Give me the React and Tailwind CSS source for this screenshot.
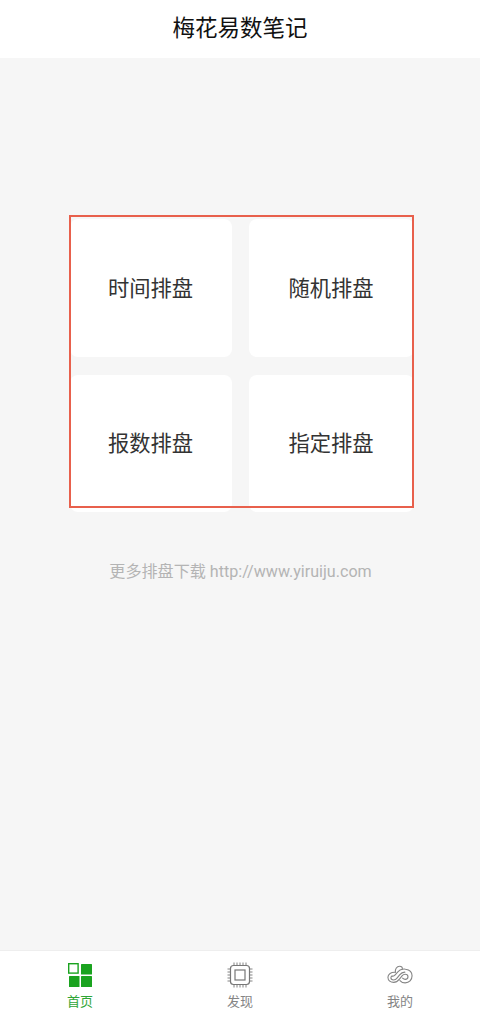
import { Fragment } from "react";

const cjk = "font-['Roboto','Noto_Sans_CJK_SC',sans-serif]";

function HomeIcon() {
  return (
    <svg width="24" height="24" viewBox="0 0 24 24" className="block">
      <rect x="0.7" y="0.7" width="9.4" height="9.4" fill="none" stroke="#1aa31f" strokeWidth="1.4" />
      <rect x="13" y="1" width="11" height="10.5" rx="0.5" fill="#1aa31f" />
      <rect x="1" y="13" width="10.5" height="11" rx="0.5" fill="#1aa31f" />
      <rect x="13" y="13" width="11" height="11" rx="0.5" fill="#1aa31f" />
    </svg>
  );
}

function ChipIcon() {
  const pins = [7, 10, 13, 16, 19];
  return (
    <svg width="26" height="26" viewBox="0 0 26 26" fill="none" stroke="#777" className="block">
      <rect x="3.5" y="3.5" width="19" height="19" rx="3" strokeWidth="1.2" />
      <rect x="8" y="8" width="10" height="10" strokeWidth="1.2" />
      {pins.map((p) => (
        <Fragment key={p}>
          <path d={`M${p} 0.5v2.5M${p} 23v2.5M0.5 ${p}h2.5M23 ${p}h2.5`} strokeWidth="0.9" />
        </Fragment>
      ))}
    </svg>
  );
}

function CloudIcon() {
  return (
    <svg width="26" height="21" viewBox="0 0 28 22" fill="none" stroke="#858585" strokeWidth="1.2" strokeLinecap="round" className="block">
      <path d="M9 7.5C8.6 4 10.6 1 13.5 1c2.6 0 3.2 1.6 3 3.2-2 .1-3.4 1.2-4.8 2.8L8.8 10.4c-1 1.2-2.2 1.6-3.4 1.2" />
      <path d="M9 7.5C4.5 7.2 1 9.4 1 13c0 3.4 3 5.4 6.2 5.4 2.8 0 4.6-1.6 6.2-3.6l2.8-3.4c1-1.2 2.2-1.8 3.4-1.8 1.8 0 3 1.2 3 2.8 0 1.6-1.2 2.8-3 2.8-1.2 0-2-.6-2.8-1.4" />
      <path d="M16.5 4.2c1.2-.2 2.6-.2 3.5 0 4 .5 7 3.2 7 7.2 0 4.4-3.2 7.6-7.4 7.6-2.4 0-4.2-1-5.6-2.6" />
      <path d="M5.4 11.6c-.8.4-1.2 1-1.2 1.8 0 1.4 1.3 2.4 3 2.4 1.6 0 2.8-1 3.8-2.2l2.6-3.2c1.4-1.8 3.4-3 5.6-3" />
    </svg>
  );
}

function Card({ label }) {
  return (
    <div className="flex items-center justify-center rounded-lg bg-white pt-[1px] pr-[1px] text-[21.3px] leading-none text-[#333]">
      {label}
    </div>
  );
}

function Tab({ label, color, children }) {
  return (
    <div className="flex w-40 flex-col items-center">
      <div className="flex h-[26px] items-center justify-center">{children}</div>
      <span className={`mt-[6px] text-[13px] leading-[16px] ${color}`}>{label}</span>
    </div>
  );
}

export default function App() {
  return (
    <div className={`flex h-[1018px] w-[480px] flex-col bg-[#f6f6f6] ${cjk}`}>
      <header className="flex h-[58px] items-center justify-center bg-white text-[22.5px] text-[#111]">
        梅花易数笔记
      </header>

      <main className="flex flex-1 flex-col items-center pt-[157px]">
        <div className="relative ml-[69px] h-[293px] w-[345px] self-start">
          <div className="grid grid-cols-[162px_165px] grid-rows-[138px_137px] gap-x-[17px] gap-y-[18px] pt-[4px] pl-[1px]">
            <Card label="时间排盘" />
            <Card label="随机排盘" />
            <Card label="报数排盘" />
            <Card label="指定排盘" />
          </div>
          <div className="absolute inset-0 border-2 border-[#e8604c]" />
        </div>
        <p className="mt-[53px] pl-[1px] text-[16.1px] leading-[22px] text-[#b4b4b4]">更多排盘下载 http://www.yiruiju.com</p>
      </main>

      <nav className="flex h-[68px] border-t border-[#eeeeee] bg-white pt-[11px]">
        <Tab label="首页" color="text-[#2fa637]">
          <HomeIcon />
        </Tab>
        <Tab label="发现" color="text-[#858585]">
          <ChipIcon />
        </Tab>
        <Tab label="我的" color="text-[#858585]">
          <CloudIcon />
        </Tab>
      </nav>
    </div>
  );
}
